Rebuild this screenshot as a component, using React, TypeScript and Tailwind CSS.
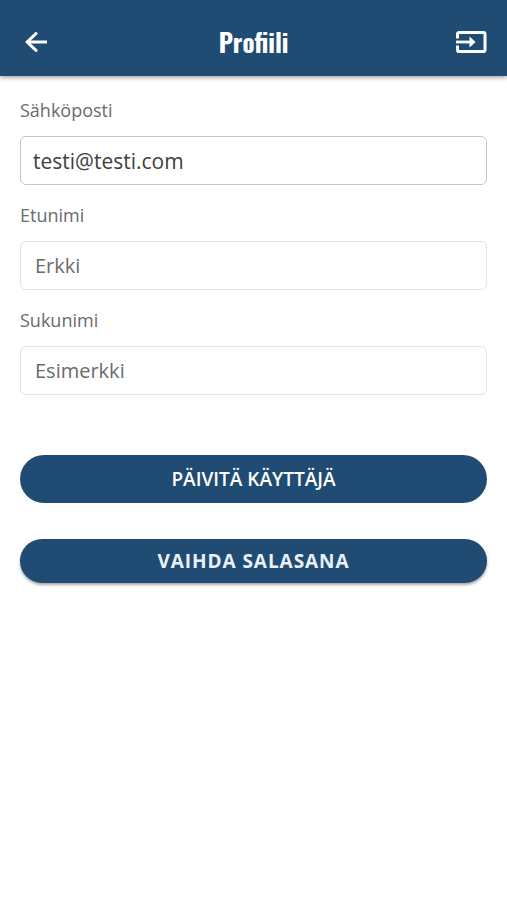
import { FC, InputHTMLAttributes, useState } from "react";
import clsx from "clsx";

const INITIAL_STATE = {
  email: "testi@testi.com",
  firstName: "",
  lastName: "",
};

const BackIcon = () => (
  <svg
    className="h-5 w-6"
    viewBox="0 0 24 20"
    fill="none"
    stroke="currentColor"
    strokeWidth="3"
    aria-hidden="true"
  >
    <path d="M23 10H3" />
    <path d="M12 1.6 3 10l9 8.4" strokeLinecap="round" strokeLinejoin="round" />
  </svg>
);

const LogoutIcon = () => (
  <svg className="h-6 w-8" viewBox="0 0 32 24" fill="none" aria-hidden="true">
    <path
      d="M2.5 8.5V4a1.6 1.6 0 0 1 1.6-1.6h24.3A1.6 1.6 0 0 1 30 4v16a1.6 1.6 0 0 1-1.6 1.6H4.1A1.6 1.6 0 0 1 2.5 20v-4.5"
      stroke="currentColor"
      strokeWidth="3"
    />
    <path d="M1 12h15" stroke="currentColor" strokeWidth="2.8" />
    <path d="M14.5 6.6 20.6 12l-6.1 5.4z" fill="currentColor" />
  </svg>
);

type FieldProps = InputHTMLAttributes<HTMLInputElement> & {
  id: string;
  label: string;
};

const Field: FC<FieldProps> = ({ id, label, className, ...rest }) => {
  return (
    <div className="flex flex-col gap-3.5">
      <label htmlFor={id} className="text-lg leading-6 text-[#6b6b6b]">
        {label}
      </label>
      <input
        id={id}
        className={clsx(
          "h-[49px] w-full rounded-md border bg-white outline-none placeholder:text-[#6b6b6b] placeholder:opacity-100",
          className
        )}
        {...rest}
      />
    </div>
  );
};

const App = () => {
  const [user, setUser] = useState(INITIAL_STATE);

  return (
    <div className="min-h-screen bg-white font-['Open_Sans','Noto_Sans',sans-serif]">
      <header className="grid h-19 grid-cols-[1fr_auto_1fr] items-center bg-[#204c74] px-5 pt-2 text-white shadow-[0_1px_5px_rgba(0,0,0,0.45)]">
        <button type="button" aria-label="Takaisin" className="justify-self-start px-1">
          <BackIcon />
        </button>
        <h1 className="font-['Oswald','Roboto_Condensed','Roboto',sans-serif] text-[25px] leading-9 font-bold">
          Profiili
        </h1>
        <button type="button" aria-label="Kirjaudu ulos" className="justify-self-end">
          <LogoutIcon />
        </button>
      </header>

      <form
        className="flex flex-col px-5 pt-[22px]"
        onSubmit={(e) => e.preventDefault()}
      >
        <div className="flex flex-col gap-[18px]">
          <Field
            id="email"
            type="email"
            label="Sähköposti"
            className="border-[#c6c6c6] px-3 text-[21px] text-[#404040]"
            value={user.email}
            onChange={(e) => setUser({ ...user, email: e.target.value })}
          />
          <Field
            id="firstName"
            type="text"
            label="Etunimi"
            placeholder="Erkki"
            className="border-[#e2e2e2] px-3.5 text-xl text-[#404040]"
            value={user.firstName}
            onChange={(e) => setUser({ ...user, firstName: e.target.value })}
          />
          <Field
            id="lastName"
            type="text"
            label="Sukunimi"
            placeholder="Esimerkki"
            className="border-[#e2e2e2] px-3.5 text-xl text-[#404040]"
            value={user.lastName}
            onChange={(e) => setUser({ ...user, lastName: e.target.value })}
          />
        </div>

        <button
          type="submit"
          className="mt-15 h-12 rounded-full bg-[#204c74] text-[19px] font-semibold text-white"
        >
          PÄIVITÄ KÄYTTÄJÄ
        </button>
        <button
          type="button"
          className="mt-9 h-11 rounded-full bg-[#204c74] text-[19px] font-bold tracking-wider text-[#eaf1f8] shadow-[0_2px_3px_rgba(0,0,0,0.35)]"
        >
          VAIHDA SALASANA
        </button>
      </form>
    </div>
  );
};

export default App;
